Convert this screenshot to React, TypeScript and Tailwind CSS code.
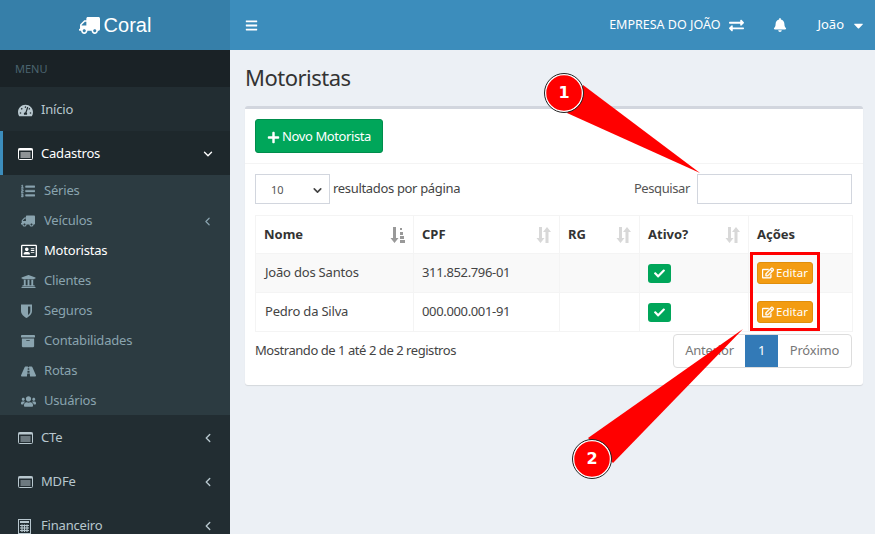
import type { ReactNode } from "react";
import { ChevronDown, ChevronLeft } from "lucide-react";
import {
  FaArchive, FaBars, FaBell, FaCaretDown, FaCheck, FaExchangeAlt, FaListOl, FaPlus,
  FaRegAddressCard, FaRegEdit, FaRoad, FaTachometerAlt, FaTruck, FaUniversity, FaUsers,
} from "react-icons/fa";

// FA4 look-alikes that the package does not carry
const ListAltIcon = () => (
  <svg width="15" height="12" viewBox="0 0 15 12" fill="none" stroke="currentColor">
    <rect x="0.5" y="0.5" width="14" height="11" rx="1" />
    <path d="M0.5 1.5h14" strokeWidth="2" />
    <path d="M2.5 5h10M2.5 7h10M2.5 9h10" />
  </svg>
);

const ShieldIcon = () => (
  <svg width="11" height="14" viewBox="0 0 11 14" fill="currentColor">
    <path d="M0 0.5h11v6.5c0 3.5-3 5.5-5.5 7C3 12.500 0 10.500 0 7zM7 2.500v8.500c1.500-1 2.300-2.300 2.300-4V2.500z" fillRule="evenodd" />
  </svg>
);

const CalculatorIcon = () => (
  <svg width="13" height="15" viewBox="0 0 13 15" fill="none" stroke="currentColor">
    <rect x="0.500" y="0.500" width="12" height="14" />
    <rect x="2" y="2" width="9" height="2" fill="currentColor" stroke="none" />
    <path d="M2 6.500h9M2 9h9M2 11.500h9M4 5.500v7.500M6.500 5.500v7.500M9 5.500v7.500" strokeWidth="1.200" />
  </svg>
);

const SortIcon = () => (
  <svg width="15" height="16" viewBox="0 0 15 16" fill="#d8d8d8">
    <path d="M3 0h3v11h2.500L4.500 16 0.500 11H3z" />
    <path d="M9.500 16h3V5H15L11 0 7 5h2.500z" />
  </svg>
);

const SortedIcon = () => (
  <svg width="15" height="16" viewBox="0 0 15 16" fill="#999">
    <path d="M3 0h3v11h2.500L4.500 16 0.500 11H3z" />
    <path d="M10 1h2v2h-2zM10 5h3v3h-3zM10 9h4v3h-4zM10 13h5v3h-5z" />
  </svg>
);

const subItems = [
  { label: "Séries", icon: <FaListOl className="stroke-current stroke-[14]" /> },
  { label: "Veículos", icon: <FaTruck className="-scale-x-100" />, arrow: true },
  { label: "Motoristas", icon: <FaRegAddressCard className="text-[16px]" />, active: true },
  { label: "Clientes", icon: <FaUniversity className="text-[15px]" /> },
  { label: "Seguros", icon: <ShieldIcon /> },
  { label: "Contabilidades", icon: <FaArchive /> },
  { label: "Rotas", icon: <FaRoad className="text-[15px]" /> },
  { label: "Usuários", icon: <FaUsers className="text-[15px]" /> },
];

const rows = [
  { nome: "João dos Santos", cpf: "311.852.796-01", bg: "bg-[#f9f9f9]" },
  { nome: "Pedro da Silva", cpf: "000.000.001-91", bg: "bg-white" },
];

const MainItem = ({ icon, label, arrow }: { icon: ReactNode; label: string; arrow?: boolean }) => (
  <div className="flex h-[44px] items-center pl-[18px] pr-[15px] pt-[2px] text-[#b8c7ce]">
    <span className="w-[23px] text-[15px]">{icon}</span>
    <span>{label}</span>
    {arrow && <ChevronLeft size={14} strokeWidth={2.4} className="ml-auto" />}
  </div>
);

const Th = ({ label, className, sort }: { label: string; className: string; sort?: ReactNode }) => (
  <th className={`border border-[#f4f4f4] px-[8px] text-left font-bold ${className}`}>
    <div className="flex items-center justify-between">
      {label}
      {sort}
    </div>
  </th>
);

export default function App() {
  return (
    <div className="relative flex h-[534px] w-[875px] overflow-hidden bg-[#ecf0f5] font-['Noto_Sans',sans-serif] text-[13px] text-[#333]">
      {/* Sidebar */}
      <aside className="w-[230px] shrink-0 bg-[#222d32] tracking-[-0.2px]">
        <div className="flex h-[50px] items-center justify-center gap-[4px] bg-[#367fa9] font-['Liberation_Sans',sans-serif] text-[20px] tracking-normal text-white">
          <FaTruck className="-scale-x-100 text-[21px]" />
          Coral
        </div>
        <div className="flex h-[37px] items-center bg-[#1a2226] pl-[15px] pt-[2px] text-[11px] tracking-normal text-[#4b646f]">MENU</div>
        <MainItem icon={<FaTachometerAlt />} label="Início" />
        <div className="flex h-[44px] items-center border-l-[3px] border-[#3c8dbc] bg-[#1e282c] pl-[15px] pr-[15px] pt-[2px] text-white">
          <span className="w-[23px] text-[15px]"><ListAltIcon /></span>
          <span>Cadastros</span>
          <ChevronDown size={14} strokeWidth={2.4} className="ml-auto" />
        </div>
        <ul className="bg-[#2c3b41] pl-[1px] text-[#8aa4af]">
          {subItems.map((item) => (
            <li key={item.label} className={`flex h-[30px] items-center pl-[20px] pr-[16px] pt-[2px] ${item.active ? "text-white" : ""}`}>
              <span className="w-[23px] text-[14px]">{item.icon}</span>
              <span>{item.label}</span>
              {item.arrow && <ChevronLeft size={13} strokeWidth={2.2} className="ml-auto" />}
            </li>
          ))}
        </ul>
        <MainItem icon={<ListAltIcon />} label="CTe" arrow />
        <MainItem icon={<ListAltIcon />} label="MDFe" arrow />
        <MainItem icon={<CalculatorIcon />} label="Financeiro" arrow />
      </aside>

      <div className="min-w-0 flex-1">
        {/* Topbar */}
        <header className="flex h-[50px] items-center bg-[#3c8dbc] pl-[15px] pr-[9px] text-white">
          <FaBars className="text-[13px]" />
          <span className="ml-auto text-[12.5px]">EMPRESA DO JOÃO</span>
          <FaExchangeAlt className="ml-[9px] text-[15px]" />
          <FaBell className="ml-[29px] text-[14px]" />
          <span className="ml-[30px]">João</span>
          <FaCaretDown className="ml-[7px] text-[15px]" />
        </header>

        {/* Content */}
        <main className="px-[15px] pt-[14px]">
          <h1 className="h-[26px] text-[22px] leading-[26px] tracking-[-0.5px] text-[#333]">Motoristas</h1>
          <section className="mt-[16px] h-[279px] w-[618px] rounded-[3px] border-t-[3px] border-[#d2d6de] bg-white shadow-[0_1px_1px_rgba(0,0,0,0.1)]">
            <div className="h-[55px] border-b border-[#f4f4f4] pl-[10px] pt-[10px]">
              <button className="flex h-[34px] w-[128px] items-center justify-center gap-[2px] rounded-[3px] border border-[#008d4c] bg-[#00a65a] pt-[2px] text-[13px] tracking-[-0.4px] text-white">
                <FaPlus className="text-[13px]" />
                Novo Motorista
              </button>
            </div>
            <div className="pl-[10px] pr-[11px] pt-[10px]">
              <div className="flex h-[30px] items-center">
                <div className="flex h-[30px] w-[75px] items-center justify-between border border-[#d2d6de] pl-[15px] pr-[5px] pt-[2px] text-[11px] text-[#555]">
                  10
                  <ChevronDown size={13} strokeWidth={3} className="text-[#444]" />
                </div>
                <span className="ml-[3px] pb-[1px] tracking-[-0.33px] text-[#444]">resultados por página</span>
                <span className="ml-auto pb-[1px] tracking-[-0.4px] text-[#555]">Pesquisar</span>
                <input className="ml-[7px] h-[30px] w-[155px] border border-[#d2d6de] bg-white" aria-label="Pesquisar" />
              </div>
              <table className="mt-[11px] w-[597px] table-fixed border-collapse">
                <thead>
                  <tr className="h-[38px]">
                    <Th label="Nome" className="w-[158px]" sort={<SortedIcon />} />
                    <Th label="CPF" className="w-[146px]" sort={<SortIcon />} />
                    <Th label="RG" className="w-[80px]" sort={<SortIcon />} />
                    <Th label="Ativo?" className="w-[109px]" sort={<SortIcon />} />
                    <Th label="Ações" className="w-[104px]" />
                  </tr>
                </thead>
                <tbody>
                  {rows.map((row) => (
                    <tr key={row.nome} className={`h-[39px] ${row.bg}`}>
                      <td className="border border-[#f4f4f4] px-[9px] tracking-[-0.2px] text-[#444]">{row.nome}</td>
                      <td className="border border-[#f4f4f4] px-[8px] tracking-[-0.35px] text-[#444]">{row.cpf}</td>
                      <td className="border border-[#f4f4f4]" />
                      <td className="border border-[#f4f4f4] px-[8px]">
                        <span className="flex h-[19px] w-[23px] items-center justify-center rounded-[3px] bg-[#00a65a] text-[11px] text-white">
                          <FaCheck />
                        </span>
                      </td>
                      <td className="border border-[#f4f4f4] px-[8px]">
                        <button className="flex h-[22px] w-[56px] items-center justify-center gap-[2px] rounded-[3px] border border-[#e08e0b] bg-[#f39c12] text-[11.5px] text-white">
                          <FaRegEdit className="stroke-current stroke-[20] text-[12px]" />
                          Editar
                        </button>
                      </td>
                    </tr>
                  ))}
                </tbody>
              </table>
              <div className="mt-[2px] flex items-start justify-between">
                <span className="mt-[7px] tracking-[-0.45px] text-[#444]">Mostrando de 1 até 2 de 2 registros</span>
                <div className="flex h-[34px] overflow-hidden rounded-[4px] border border-[#ddd] tracking-[-0.2px] text-[#777]">
                  <span className="flex w-[71px] items-center justify-center">Anterior</span>
                  <span className="flex w-[33px] items-center justify-center bg-[#337ab7] text-white">1</span>
                  <span className="flex w-[73px] items-center justify-center">Próximo</span>
                </div>
              </div>
            </div>
          </section>
        </main>
      </div>

      {/* Annotations */}
      <div className="absolute left-[750px] top-[252px] h-[79px] w-[70px] border-[3px] border-[#f00]" />
      <svg className="absolute left-0 top-0" width="875" height="534" viewBox="0 0 875 534">
        <polygon points="583,85 700,173 567,113" fill="#f00" />
        <polygon points="588,438 743,329 613,463" fill="#f00" />
        <circle cx="564" cy="93" r="18.5" fill="#f00" stroke="#fff" strokeWidth="1.5" />
        <circle cx="564" cy="93" r="19.5" fill="none" stroke="#222" strokeWidth="1" />
        <circle cx="592" cy="459" r="18.5" fill="#f00" stroke="#fff" strokeWidth="1.5" />
        <circle cx="592" cy="459" r="19.5" fill="none" stroke="#222" strokeWidth="1" />
      </svg>
      <span className="absolute left-[544px] top-[81px] w-[40px] text-center font-['DejaVu_Sans',sans-serif] text-[16px] font-bold leading-[24px] text-white">1</span>
      <span className="absolute left-[572px] top-[447px] w-[40px] text-center font-['DejaVu_Sans',sans-serif] text-[16px] font-bold leading-[24px] text-white">2</span>
    </div>
  );
}
